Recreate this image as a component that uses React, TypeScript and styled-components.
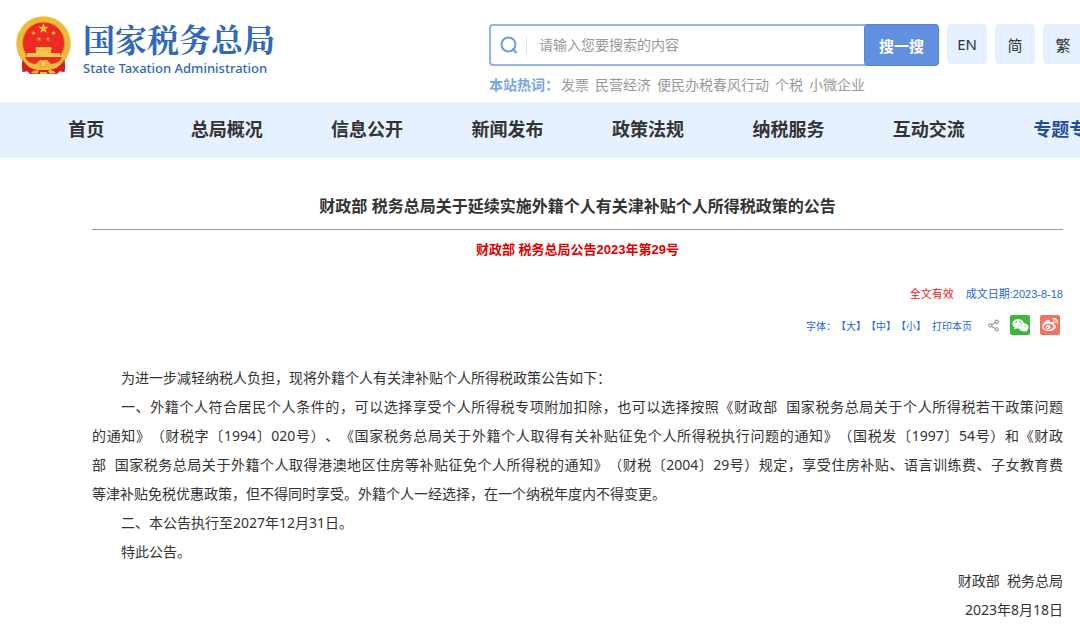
import React from "react";
import styled, { createGlobalStyle } from "styled-components";
import { Share2 } from "lucide-react";
import { FaWeixin, FaWeibo } from "react-icons/fa";

const sans = `"Liberation Sans", "Noto Sans CJK SC", sans-serif`;
const reading = `"Noto Sans", "Noto Sans CJK SC", sans-serif`;

const GlobalStyle = createGlobalStyle`
  *, *::before, *::after { box-sizing: border-box; }
  html { overflow-x: hidden; }
  body {
    margin: 0;
    overflow-x: hidden;
    background: #fff;
    color: #333;
    font-family: ${sans};
    text-spacing-trim: space-all;
  }
  a { color: inherit; text-decoration: none; }
  button, input { font-family: inherit; }
`;

const Header = styled.header`
  display: flex;
  justify-content: space-between;
  align-items: flex-start;
  min-width: 1100px;
  height: 102px;
  padding: 14px 17px 0 16px;
`;

const Brand = styled.a`
  display: flex;
  gap: 12px;
  color: #2f68bd;
`;

const BrandText = styled.div`
  display: flex;
  flex-direction: column;
  padding-top: 2px;
`;

const BrandName = styled.span`
  font-family: "Noto Serif CJK SC", "Noto Sans CJK SC", serif;
  font-size: 32px;
  line-height: 44px;
  font-weight: 700;
`;

const BrandLatin = styled.span`
  font-family: "Noto Sans", sans-serif;
  font-size: 13px;
  line-height: 16px;
  font-weight: 500;
`;

const Tools = styled.div`
  width: 594px;
  padding-top: 10px;
`;

const ToolRow = styled.div`
  display: flex;
  gap: 8px;
`;

const SearchForm = styled.form`
  display: flex;
  flex: 1;
  height: 42px;
  border: 2px solid #94b4e4;
  border-right: 0;
  border-radius: 4px;
`;

const SearchLabel = styled.label`
  display: flex;
  align-items: center;
  width: 36px;
  margin: 10px 0;
  padding-left: 9px;
  border-right: 1px solid #dde3ea;
`;

const SearchInput = styled.input`
  flex: 1;
  min-width: 0;
  padding: 0 0 0 12px;
  border: 0;
  outline: 0;
  background: transparent;
  font-size: 14px;
  &::placeholder { color: #999; opacity: 1; }
`;

const SearchButton = styled.button`
  width: 75px;
  margin: -2px 0;
  border: 1px solid #5585d6;
  border-radius: 4px;
  background: #6090de;
  color: #fff;
  font-size: 15px;
  font-weight: 700;
`;

const LangButton = styled.button`
  width: 40px;
  height: 40px;
  padding: 0;
  border: 0;
  border-radius: 4px;
  background: #e5f1ff;
  color: #333;
  font-family: ${reading};
  font-size: 15px;
`;

const HotWords = styled.div`
  display: flex;
  gap: 6px;
  padding-top: 9px;
  color: #999;
  font-size: 14px;
  line-height: 20px;
`;

const HotLabel = styled.strong`
  margin-right: -4px;
  color: #7aa7e0;
`;

const Nav = styled.nav`
  padding-left: 16px;
  overflow: hidden;
  background: #e5f1ff;
`;

const NavList = styled.ul`
  display: flex;
  margin: 0;
  padding: 0;
  list-style: none;
`;

const NavItem = styled.li<{ $accent?: boolean }>`
  flex: 0 0 13.2%;
  color: ${(p) => (p.$accent ? "#1f4e9f" : "#333")};
  font-size: 18px;
  font-weight: 700;
  line-height: 56px;
  text-align: center;
  white-space: nowrap;
`;

const Article = styled.main`
  padding: 35px 17px 12px 92px;
`;

const Title = styled.h1`
  margin: 0;
  padding-bottom: 9px;
  border-bottom: 1px solid #999;
  font-size: 16px;
  line-height: 27px;
  text-align: center;
`;

const DocNumber = styled.p`
  margin: 8px 0 24px;
  color: #e00000;
  font-size: 13px;
  font-weight: 700;
  line-height: 24px;
  text-align: center;
`;

const Meta = styled.div`
  display: flex;
  justify-content: flex-end;
  gap: 12px;
  color: #1a66d9;
  font-size: 11px;
  line-height: 16px;
`;

const Validity = styled.span`
  color: #f5141e;
`;

const ActionRow = styled.div`
  display: flex;
  justify-content: flex-end;
  align-items: center;
  height: 20px;
  margin: 13px 3px 28px 0;
  color: #1a66d9;
  font-size: 10px;
`;

const TextButton = styled.button`
  padding: 0;
  border: 0;
  background: none;
  color: inherit;
  font-size: 10px;
`;

const PrintButton = styled(TextButton)`
  margin: 0 15px 0 6px;
`;

const ShareButton = styled.button<{ $bg?: string }>`
  display: flex;
  align-items: center;
  justify-content: center;
  width: ${(p) => (p.$bg ? "20px" : "13px")};
  height: 20px;
  margin-right: 10px;
  padding: 0;
  border: 0;
  border-radius: 2px;
  background: ${(p) => p.$bg || "none"};
  color: ${(p) => (p.$bg ? "#fff" : "#999")};
  &:last-child { margin-right: 0; }
`;

const Body = styled.section`
  font-family: ${reading};
  font-size: 14px;
  line-height: 29px;
`;

const Paragraph = styled.p`
  margin: 0;
  text-indent: 29px;
`;

const Line = styled.span<{ $full?: boolean }>`
  display: block;
  text-align-last: ${(p) => (p.$full ? "justify" : "left")};
  & + & { text-indent: 0; }
`;

const Signature = styled.p`
  margin: 0;
  text-align: right;
`;

const star = (cx: number, cy: number, r: number) =>
  Array.from({ length: 10 }, (_, i) => {
    const a = (Math.PI * i) / 5 - Math.PI / 2;
    const d = i % 2 ? r * 0.4 : r;
    return `${(cx + d * Math.cos(a)).toFixed(2)},${(cy + d * Math.sin(a)).toFixed(2)}`;
  }).join(" ");

const Emblem = () => (
  <svg width="55" height="62" viewBox="0 0 55 62" aria-hidden="true">
    <path d="M9 42 Q5 51 7 58 L12 57L15 60 L40 60 L43 57 L48 58 Q50 51 46 42Z" fill="#d81f20" />
    <circle cx="27.5" cy="29.5" r="27.3" fill="#f2bd3d" />
    <circle cx="27.5" cy="29.5" r="24.5" fill="none" stroke="#e5ab32" strokeWidth="1" strokeDasharray="2 2" />
    <circle cx="27.5" cy="29" r="21" fill="#ee2a25" stroke="#d99a27" strokeWidth="1" />
    <polygon points={star(27.5, 14.5, 5.4)} fill="#f7c33f" />
    <polygon points={star(17.5, 19, 2.6)} fill="#f7c33f" />
    <polygon points={star(37.5, 19, 2.6)} fill="#f7c33f" />
    <polygon points={star(23, 25, 2.6)} fill="#f7c33f" />
    <polygon points={star(32, 25, 2.6)} fill="#f7c33f" />
    <path d="M20 33h15l1 2.5h-1v3.5h9v4H11v-4h9v-3.5h-1z" fill="#f7c64a" />
    <path d="M20 36h15" stroke="#e39d2c" strokeWidth=".6" />
    <path d="M7.500 42 Q5 50 6.500 58L11 57L14 60H41L44 57L48.500 58Q50 50 47.500 42L43 51L35 56H20L12 51Z" fill="#d81f20" />
    <path d="M9 43H46Q43 51 36 53L27.500 49L19 53Q12 51 9 43Z" fill="#ed2a24" />
    <path d="M7 41Q12 50 20 50L24 46H31L35 50Q43 50 48 41L49 44Q45 53 37 55L32 52L27.500 56L23 52L18 55Q10 53 6 44Z" fill="#f2bd3d" />
    <circle cx="27.5" cy="50" r="3.4" fill="#f7cb51" stroke="#d5952a" strokeWidth="1" />
    <path d="M15 59Q19 54 23 57L21 60ZM40 59Q36 54 32 57L34 60ZM24 58h7v2h-7z" fill="#f2bd3d" />
  </svg>
);

const navItems = ["首页", "总局概况", "信息公开", "新闻发布", "政策法规", "纳税服务", "互动交流", "专题专栏"];
const hotWords = ["发票", "民营经济", "便民办税春风行动", "个税", "小微企业"];

export default function App() {
  return (
    <div lang="zh-CN">
      <GlobalStyle />
      <Header>
        <Brand href="#">
          <Emblem />
          <BrandText>
            <BrandName>国家税务总局</BrandName>
            <BrandLatin>State Taxation Administration</BrandLatin>
          </BrandText>
        </Brand>
        <Tools>
          <ToolRow>
            <SearchForm onSubmit={(e) => e.preventDefault()}>
              <SearchLabel htmlFor="keyword" aria-label="搜索">
                <svg width="18" height="18" viewBox="0 0 18 18" fill="none" stroke="#6c9fe0" strokeWidth="2">
                  <circle cx="8.5" cy="8.5" r="7" />
                  <path d="M13 13l3 3.5" strokeLinecap="round" />
                </svg>
              </SearchLabel>
              <SearchInput id="keyword" type="text" placeholder="请输入您要搜索的内容" />
              <SearchButton type="submit">搜一搜</SearchButton>
            </SearchForm>
            <LangButton type="button">EN</LangButton>
            <LangButton type="button">简</LangButton>
            <LangButton type="button">繁</LangButton>
          </ToolRow>
          <HotWords>
            <HotLabel>本站热词：</HotLabel>
            {hotWords.map((word) => (
              <a href="#" key={word}>{word}</a>
            ))}
          </HotWords>
        </Tools>
      </Header>
      <Nav>
        <NavList>
          {navItems.map((item) => (
            <NavItem key={item} $accent={item === "专题专栏"}>
              <a href="#">{item}</a>
            </NavItem>
          ))}
        </NavList>
      </Nav>
      <Article>
        <Title>财政部 税务总局关于延续实施外籍个人有关津补贴个人所得税政策的公告</Title>
        <DocNumber>财政部 税务总局公告2023年第29号</DocNumber>
        <Meta>
          <Validity>全文有效</Validity>
          <span>成文日期:2023-8-18</span>
        </Meta>
        <ActionRow>
          <span>字体：</span>
          <TextButton type="button">【大】</TextButton>
          <TextButton type="button">【中】</TextButton>
          <TextButton type="button">【小】</TextButton>
          <PrintButton type="button">打印本页</PrintButton>
          <ShareButton type="button" aria-label="分享"><Share2 size={13} strokeWidth={2} /></ShareButton>
          <ShareButton type="button" $bg="#3bb936" aria-label="微信"><FaWeixin size={17} /></ShareButton>
          <ShareButton type="button" $bg="#f7705f" aria-label="微博"><FaWeibo size={16} /></ShareButton>
        </ActionRow>
        <Body>
          <Paragraph>为进一步减轻纳税人负担，现将外籍个人有关津补贴个人所得税政策公告如下：</Paragraph>
          <Paragraph>
            <Line $full>一、外籍个人符合居民个人条件的，可以选择享受个人所得税专项附加扣除，也可以选择按照《财政部&nbsp; 国家税务总局关于个人所得税若干政策问题</Line>
            <Line $full>的通知》（财税字〔1994〕020号）、《国家税务总局关于外籍个人取得有关补贴征免个人所得税执行问题的通知》（国税发〔1997〕54号）和《财政</Line>
            <Line $full>部&nbsp; 国家税务总局关于外籍个人取得港澳地区住房等补贴征免个人所得税的通知》（财税〔2004〕29号）规定，享受住房补贴、语言训练费、子女教育费</Line>
            <Line>等津补贴免税优惠政策，但不得同时享受。外籍个人一经选择，在一个纳税年度内不得变更。</Line>
          </Paragraph>
          <Paragraph>二、本公告执行至2027年12月31日。</Paragraph>
          <Paragraph>特此公告。</Paragraph>
          <Signature>财政部&nbsp; 税务总局</Signature>
          <Signature>2023年8月18日</Signature>
        </Body>
      </Article>
    </div>
  );
}
